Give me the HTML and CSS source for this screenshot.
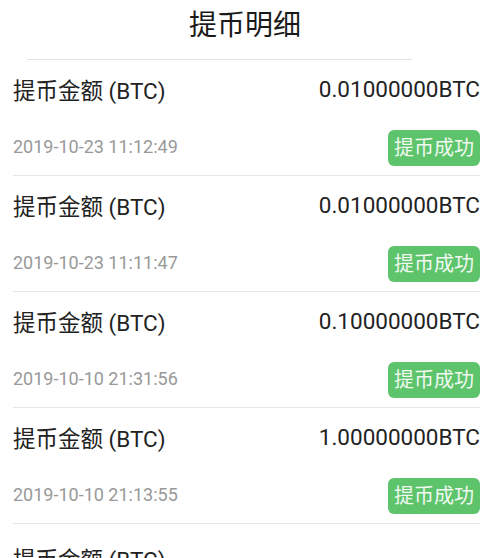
FILE: index.html
```html
<!DOCTYPE html>
<html>
<head>
  <meta charset="utf-8">
  <title>提币明细</title>
  <link rel="stylesheet" href="styles.css">
</head>
<body>
  <div class="header">
    <h1>提币明细</h1>
  </div>
  <ul class="lista">
    <li class="item">
      <div class="linha">
        <span class="rotulo">提币金额 (BTC)</span>
        <span class="valor">0.01000000BTC</span>
      </div>
      <div class="linha">
        <span class="data">2019-10-23 11:12:49</span>
        <span class="status">提币成功</span>
      </div>
    </li>
    <li class="item">
      <div class="linha">
        <span class="rotulo">提币金额 (BTC)</span>
        <span class="valor">0.01000000BTC</span>
      </div>
      <div class="linha">
        <span class="data">2019-10-23 11:11:47</span>
        <span class="status">提币成功</span>
      </div>
    </li>
    <li class="item">
      <div class="linha">
        <span class="rotulo">提币金额 (BTC)</span>
        <span class="valor">0.10000000BTC</span>
      </div>
      <div class="linha">
        <span class="data">2019-10-10 21:31:56</span>
        <span class="status">提币成功</span>
      </div>
    </li>
    <li class="item">
      <div class="linha">
        <span class="rotulo">提币金额 (BTC)</span>
        <span class="valor">1.00000000BTC</span>
      </div>
      <div class="linha">
        <span class="data">2019-10-10 21:13:55</span>
        <span class="status">提币成功</span>
      </div>
    </li>
    <li class="item ultimo">
      <div class="linha">
        <span class="rotulo">提币金额 (BTC)</span>
      </div>
    </li>
  </ul>
</body>
</html>
```

FILE: styles.css
```css
body {
  font-family: Roboto, "Noto Sans CJK SC", sans-serif;
  margin: 0;
  padding: 0;
  background-color: #fff;
  color: #222;
  overflow: hidden;
}

.header {
  margin: 0 87px 0 27px;
  height: 59px;
  border-bottom: 1px solid #e2e2e2;
}

.header h1 {
  margin: 0;
  padding-left: 162px;
  font-size: 28px;
  font-weight: 400;
  line-height: 52px;
  text-align: left;
  color: #1a1a1a;
}

.lista {
  list-style: none;
  margin: 0;
  padding: 0;
}

.item {
  margin: 0 19px 0 13px;
  border-bottom: 1px solid #e6e6e6;
}

.linha {
  display: flex;
  justify-content: space-between;
  align-items: center;
  height: 58px;
}

.linha + .linha {
  height: 57px;
}

.ultimo .linha {
  height: 50px;
  align-items: flex-end;
}

.rotulo, .valor {
  font-size: 22.5px;
  color: #222;
}

.data {
  font-size: 18px;
  color: #999;
}

.status {
  display: inline-block;
  width: 92px;
  height: 36px;
  line-height: 36px;
  text-align: center;
  font-size: 20px;
  color: #f1f9f1;
  background-color: #5dc46c;
  border-radius: 6px;
  margin-top: 2px;
}
```
